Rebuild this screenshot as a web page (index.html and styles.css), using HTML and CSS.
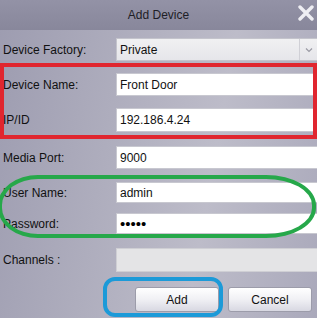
FILE: index.html
```html
<!DOCTYPE html>
<html lang="en">
<head>
    <meta charset="UTF-8">
    <title>Add Device</title>
    <link rel="stylesheet" href="styles.css">
</head>
<body>
    <div class="dialog">
        <div class="titlebar">
            <span class="title">Add Device</span>
            <span class="close">
                <svg width="16" height="16" viewBox="0 0 16 16">
                    <path d="M2 2 L14 14 M14 2 L2 14" stroke="#eeeef3" stroke-width="3.4" stroke-linecap="round"/>
                </svg>
            </span>
        </div>

        <div class="form">
            <div class="row">
                <label>Device Factory:</label>
                <div class="select">
                    <span>Private</span>
                    <span class="arrow">
                        <svg width="8" height="6" viewBox="0 0 8 6"><path d="M1 1.5 L4 4.5 L7 1.5" fill="none" stroke="#9a9aa4" stroke-width="1.2"/></svg>
                    </span>
                </div>
            </div>
            <div class="row row-device">
                <label for="devName">Device Name:</label>
                <input type="text" id="devName" value="Front Door">
            </div>
            <div class="row row-ip">
                <label for="ipId">IP/ID</label>
                <input type="text" id="ipId" value="192.186.4.24">
            </div>
            <div class="row row-port">
                <label for="port">Media Port:</label>
                <input type="text" id="port" value="9000">
            </div>
            <div class="row row-user">
                <label for="user">User Name:</label>
                <input type="text" id="user" value="admin">
            </div>
            <div class="row row-pass">
                <label for="pass">Password:</label>
                <input type="password" id="pass" value="admin">
            </div>
            <div class="row row-chan">
                <label for="chan">Channels :</label>
                <input type="text" id="chan" disabled>
            </div>
            <div class="buttons">
                <button class="btn">Add</button>
                <button class="btn">Cancel</button>
            </div>
        </div>

        <!-- hand drawn highlights over the form -->
        <div class="mark mark-red"></div>
        <div class="mark mark-green"></div>
        <div class="mark mark-blue"></div>
    </div>
</body>
</html>
```

FILE: styles.css
```css
body {
    margin: 0;
    font-family: "Liberation Sans", Arial, sans-serif;
    background: #a4a3b5;
}
.dialog {
    position: relative;
    width: 317px;
    height: 318px;
    overflow: hidden;
    background: linear-gradient(100deg, #9d9cb0 0%, #aeadbd 35%, #bdbcc9 65%, #aaa9bb 100%);
}
.titlebar {
    height: 30px;
    display: flex;
    align-items: center;
    justify-content: center;
    position: relative;
    background: linear-gradient(180deg, #9392a6 0%, #88879b 100%);
}
.title {
    font-size: 12px;
    color: #1e1e26;
}
.close {
    position: absolute;
    right: 3px;
    top: 5px;
}
.form {
    padding-top: 8px;
}
.row {
    display: grid;
    grid-template-columns: 116px 1fr;
    align-items: center;
    height: 23px;
    margin-bottom: 12px;
}
.row label {
    padding-left: 3px;
    font-size: 12px;
    color: #111;
}
.row input {
    height: 100%;
    box-sizing: border-box;
    border: 1px solid #c8c8d0;
    border-right: none;
    background: #fff;
    padding: 0 0 0 3px;
    font-family: inherit;
    font-size: 12px;
    color: #111;
    outline: none;
}
.row input[type="password"] {
    font-size: 15px;
    letter-spacing: 0;
    color: #000;
}
.row input:disabled {
    background: #e4e4e6;
    border-color: #cfcfd4;
}
.select {
    height: 100%;
    display: flex;
    align-items: center;
    justify-content: space-between;
    background: linear-gradient(180deg, #f0f0f2, #e6e6ea);
    border: 1px solid #c4c4cc;
    border-right: none;
    box-sizing: border-box;
    padding-left: 3px;
    font-size: 12px;
    color: #111;
}
.select .arrow {
    width: 17px;
    height: 100%;
    display: flex;
    align-items: center;
    justify-content: center;
    border-left: 1px solid #d0d0d6;
}
.row-device { margin-bottom: 12px; }
.row-ip { height: 24px; margin-bottom: 14px; }
.row-port { margin-bottom: 13px; }
.row-user { height: 21px; margin-bottom: 10px; }
.row-pass { height: 21px; margin-bottom: 14px; }
.row-chan { height: 24px; margin-bottom: 15px; }
.buttons {
    display: flex;
    gap: 9px;
    padding-left: 135px;
}
.btn {
    width: 84px;
    height: 25px;
    border: 1px solid #9c9caa;
    border-radius: 3px;
    background: linear-gradient(180deg, #ffffff 0%, #f0f0f4 50%, #d8d8e2 100%);
    font-family: inherit;
    font-size: 12px;
    color: #111;
}
.mark {
    position: absolute;
    box-sizing: border-box;
    pointer-events: none;
}
.mark-red {
    left: 0;
    top: 63px;
    width: 317px;
    height: 76px;
    border: 4px solid #e0262f;
}
.mark-green {
    left: -2px;
    top: 175px;
    width: 318px;
    height: 63px;
    border: 4px solid #26a84a;
    border-radius: 40px 50px 50px 40px / 30px;
}
.mark-blue {
    left: 103px;
    top: 277px;
    width: 120px;
    height: 40px;
    border: 4px solid #1c9ad8;
    border-radius: 12px;
}
```
